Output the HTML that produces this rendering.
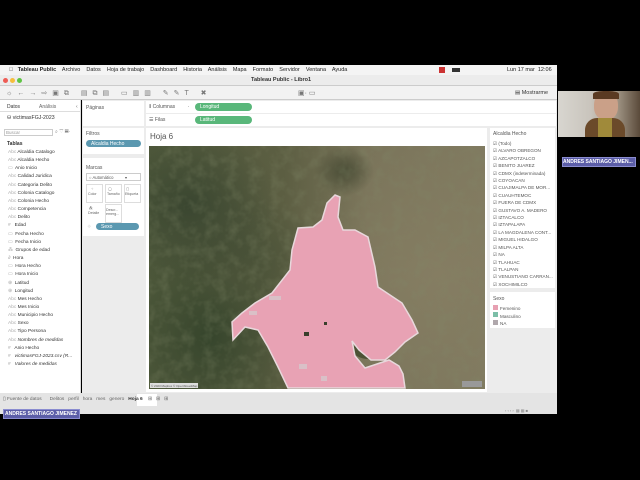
<!DOCTYPE html><html><head><style>
*{margin:0;padding:0;box-sizing:border-box}
body{width:640px;height:480px;background:#000;font-family:"Liberation Sans",sans-serif;position:relative;overflow:hidden;font-size:5px;color:#333}
.a{position:absolute}
.t{position:absolute;white-space:nowrap}
.pill{position:absolute;border-radius:5px;color:#fff;font-size:5px;padding:1px 5px}
</style></head><body>
<!-- menubar -->
<div class="a" style="left:0;top:65px;width:557px;height:10px;background:#f4f4f4"></div>
<div class="t" style="left:9px;top:67px;font-size:5.5px;color:#222">&#63743;&nbsp;&nbsp; <b>Tableau Public</b>&nbsp;&nbsp;&nbsp; Archivo&nbsp;&nbsp;&nbsp; Datos&nbsp;&nbsp;&nbsp; Hoja de trabajo&nbsp;&nbsp;&nbsp; Dashboard&nbsp;&nbsp;&nbsp; Historia&nbsp;&nbsp;&nbsp; Análisis&nbsp;&nbsp;&nbsp; Mapa&nbsp;&nbsp;&nbsp; Formato&nbsp;&nbsp;&nbsp; Servidor&nbsp;&nbsp;&nbsp; Ventana&nbsp;&nbsp;&nbsp; Ayuda</div>
<div class="t" style="left:507px;top:67px;font-size:5.5px;color:#222">Lun 17 mar&nbsp; 12:06</div>
<div class="a" style="left:439px;top:67px;width:6px;height:6px;background:#c33"></div>
<div class="a" style="left:452px;top:68px;width:8px;height:4px;background:#333"></div>
<!-- title bar -->
<div class="a" style="left:0;top:75px;width:557px;height:11px;background:#ececec;border-bottom:1px solid #ccc"></div>
<div class="a" style="left:3px;top:78px;width:5px;height:5px;border-radius:50%;background:#ee5c55"></div>
<div class="a" style="left:10px;top:78px;width:5px;height:5px;border-radius:50%;background:#f5be3c"></div>
<div class="a" style="left:17px;top:78px;width:5px;height:5px;border-radius:50%;background:#5ec443"></div>
<div class="t" style="left:251px;top:77px;font-size:5.5px;font-weight:bold;color:#333">Tableau Public - Libro1</div>
<!-- toolbar -->
<div class="a" style="left:0;top:86px;width:557px;height:14px;background:#f2f2f2;border-bottom:1px solid #ccc"></div>
<div class="t" style="left:6px;top:89px;font-size:7px;color:#777;letter-spacing:5px">☼←→⇨▣⧉ ▤⧉▤ ▭▥▥ ✎✎T ✖</div>
<div class="t" style="left:515px;top:90px;font-size:5.5px;color:#333">▤ Mostrarme</div>
<div class="t" style="left:298px;top:89px;font-size:7px;color:#777">▣· ▭</div>
<!-- left pane -->
<div class="a" style="left:0;top:100px;width:81px;height:293px;background:#fff;border-right:1px solid #ddd"></div>
<div class="t" style="left:7px;top:104px;font-size:5px;color:#333">Datos</div>
<div class="t" style="left:39px;top:104px;font-size:5px;color:#666">Análisis</div>
<div class="t" style="left:76px;top:104px;font-size:5px;color:#666">‹</div>
<div class="a" style="left:0;top:111px;width:81px;height:1px;background:#ddd"></div>
<div class="t" style="left:7px;top:115px;font-size:5.2px;color:#333">⛁ victimasFGJ-2023</div>
<div class="a" style="left:4px;top:129px;width:49px;height:7px;border:1px solid #ccc"></div>
<div class="t" style="left:6px;top:130px;font-size:4.5px;color:#999">Buscar</div>
<div class="t" style="left:55px;top:129px;font-size:5px;color:#888">⌕ ▽ ▤·</div>
<div class="t" style="left:7px;top:141px;font-size:5px;font-weight:bold;color:#333">Tablas</div>
<div class="t" style="left:8px;top:149px;font-size:4.8px;line-height:8.15px;color:#333">
<span style="color:#aaa">Abc</span> Alcaldia Catalogo<br><span style="color:#aaa">Abc</span> Alcaldia Hecho<br><span style="color:#aaa">▭</span>&nbsp; Anio Inicio<br><span style="color:#aaa">Abc</span> Calidad Juridica<br><span style="color:#aaa">Abc</span> Categoria Delito<br><span style="color:#aaa">Abc</span> Colonia Catalogo<br><span style="color:#aaa">Abc</span> Colonia Hecho<br><span style="color:#aaa">Abc</span> Competencia<br><span style="color:#aaa">Abc</span> Delito<br><span style="color:#aaa">#</span>&nbsp;&nbsp; Edad<br><span style="color:#aaa">▭</span>&nbsp; Fecha Hecho<br><span style="color:#aaa">▭</span>&nbsp; Fecha Inicio<br><span style="color:#aaa">⁂</span>&nbsp; Grupos de edad<br><span style="color:#aaa">∂</span>&nbsp; Hora<br><span style="color:#aaa">▭</span>&nbsp; Hora Hecho<br><span style="color:#aaa">▭</span>&nbsp; Hora Inicio<br><span style="color:#aaa">⊕</span>&nbsp; Latitud<br><span style="color:#aaa">⊕</span>&nbsp; Longitud<br><span style="color:#aaa">Abc</span> Mes Hecho<br><span style="color:#aaa">Abc</span> Mes Inicio<br><span style="color:#aaa">Abc</span> Municipio Hecho<br><span style="color:#aaa">Abc</span> Sexo<br><span style="color:#aaa">Abc</span> Tipo Persona<br><span style="color:#aaa">Abc</span> <i>Nombres de medidas</i><br><span style="color:#aaa">#</span>&nbsp;&nbsp; Anio Hecho<br><span style="color:#aaa">#</span>&nbsp;&nbsp; <i>victimasFGJ-2023.csv (R...</i><br><span style="color:#aaa">#</span>&nbsp;&nbsp; <i>Valores de medidas</i></div>
<!-- middle pane -->
<div class="a" style="left:82px;top:100px;width:63px;height:293px;background:#ececec"></div>
<div class="a" style="left:83px;top:101px;width:61px;height:25px;background:#fff"></div>
<div class="t" style="left:86px;top:105px;font-size:5px;color:#555">Páginas</div>
<div class="a" style="left:83px;top:128px;width:61px;height:26px;background:#fff"></div>
<div class="t" style="left:86px;top:131px;font-size:5px;color:#555">Filtros</div>
<div class="pill" style="left:86px;top:140px;width:55px;height:7px;background:#5b98b0">Alcaldia Hecho</div>
<div class="a" style="left:83px;top:158px;width:61px;height:78px;background:#fff"></div>
<div class="t" style="left:86px;top:165px;font-size:5px;color:#555">Marcas</div>
<div class="a" style="left:86px;top:173px;width:55px;height:8px;border:1px solid #ccc"></div>
<div class="t" style="left:89px;top:175px;font-size:4.2px;color:#555">○ Automático&nbsp;&nbsp;&nbsp;&nbsp;&nbsp;&nbsp;&nbsp;&nbsp;&nbsp; ▾</div>
<div class="a" style="left:86px;top:184px;width:17px;height:19px;border:1px solid #ddd"></div>
<div class="a" style="left:105px;top:184px;width:17px;height:19px;border:1px solid #ddd"></div>
<div class="a" style="left:124px;top:184px;width:17px;height:19px;border:1px solid #ddd"></div>
<div class="t" style="left:88px;top:187px;font-size:3.6px;color:#666;line-height:5px;text-align:center">⁘<br>Color</div>
<div class="t" style="left:107px;top:187px;font-size:3.6px;color:#666;line-height:5px">&nbsp;◯<br>Tamaño</div>
<div class="t" style="left:125px;top:187px;font-size:3.6px;color:#666;line-height:5px">&nbsp;▢<br>Etiqueta</div>
<div class="a" style="left:105px;top:204px;width:17px;height:19px;border:1px solid #ddd"></div>
<div class="t" style="left:88px;top:206px;font-size:3.6px;color:#666;line-height:5px">&nbsp;⁂<br>Detalle</div>
<div class="t" style="left:106px;top:208px;font-size:3.6px;color:#666;line-height:4px">Descr...<br>emerg...</div>
<div class="t" style="left:87px;top:224px;font-size:5px;color:#777">⁘</div>
<div class="pill" style="left:96px;top:223px;width:43px;height:7px;background:#5b98b0">Sexo</div>
<!-- shelves -->
<div class="a" style="left:145px;top:100px;width:412px;height:27px;background:#ececec"></div>
<div class="a" style="left:146px;top:101px;width:410px;height:12px;background:#fff"></div>
<div class="a" style="left:146px;top:114px;width:410px;height:12px;background:#fff"></div>
<div class="t" style="left:149px;top:104px;font-size:5px;color:#555">⦀ Columnas&nbsp;&nbsp;&nbsp;&nbsp;&nbsp;&nbsp;&nbsp;&nbsp; ·</div>
<div class="t" style="left:149px;top:117px;font-size:5px;color:#555">☰ Filas</div>
<div class="pill" style="left:195px;top:103px;width:57px;height:8px;background:#59b77a">Longitud</div>
<div class="pill" style="left:195px;top:116px;width:57px;height:8px;background:#59b77a">Latitud</div>
<!-- view -->
<div class="a" style="left:145px;top:127px;width:412px;height:266px;background:#ececec"></div>
<div class="a" style="left:146px;top:128px;width:341px;height:264px;background:#fff"></div>
<div class="t" style="left:150px;top:132px;font-size:8px;color:#555">Hoja 6</div>
<div class="a" style="left:149px;top:146px;width:336px;height:243px;background:
radial-gradient(ellipse 30px 25px at 195px 25px,#4a4d36,transparent),
radial-gradient(ellipse 90px 80px at 40px 60px,#3a4630,transparent),
radial-gradient(ellipse 70px 60px at 100px 110px,#4a5238,transparent),
radial-gradient(ellipse 90px 110px at 60px 190px,#36452c,transparent),
radial-gradient(ellipse 140px 140px at 290px 130px,#857d62,transparent),
linear-gradient(90deg,#505a3c,#5c5e42 40%,#7a745a 65%,#807a60);overflow:hidden">
<svg width="336" height="243" style="position:absolute;left:0;top:0">
<filter id="n"><feTurbulence type="fractalNoise" baseFrequency="0.09" numOctaves="3" seed="4"/><feColorMatrix type="matrix" values="0 0 0 0 0.22  0 0 0 0 0.25  0 0 0 0 0.14  0 0 0 1.2 -0.5"/></filter>
<rect width="336" height="243" filter="url(#n)" opacity="0.55"/>
<ellipse cx="220" cy="204" rx="16" ry="9" fill="#4c5235"/>
<path d="M186 49 L191 51 L189 71 L194 84 L206 84 L219 91 L226 121 L229 141 L253 157 L263 174 L269 187 L256 196 L246 206 L236 214 L222 214 L210 204 L203 195 L206 210 L216 222 L240 214 L250 220 L254 228 L256 242 L139 242 L129 221 L119 201 L109 184 L96 181 L84 194 L83 176 L93 167 L106 157 L123 147 L141 124 L143 104 L149 82 L164 81 L173 74 L178 57 Z" fill="#e8a2b4" stroke="#e8d8dc" stroke-width="1.5"/>
<g fill="#d6c8cc" opacity="0.8"><rect x="120" y="150" width="12" height="4"/><rect x="100" y="165" width="8" height="4"/><rect x="150" y="218" width="8" height="5"/><rect x="172" y="230" width="6" height="5"/></g>
<g fill="#3a3f2c"><rect x="155" y="186" width="5" height="4"/><rect x="175" y="176" width="3" height="3"/></g>
<rect x="1" y="237" width="48" height="5" fill="#ddd"/>
<rect x="313" y="235" width="20" height="6" fill="#999"/>
</svg>
<div class="t" style="left:2px;top:238px;font-size:3px;color:#555">© 2023 Mapbox © OpenStreetMap</div>
</div>
<!-- legends -->
<div class="a" style="left:490px;top:128px;width:65px;height:160px;background:#fff"></div>
<div class="t" style="left:493px;top:131px;font-size:5px;color:#555">Alcaldia Hecho</div>
<div class="t" style="left:493px;top:140px;font-size:4.6px;line-height:7.4px;color:#555">☑ (Todo)<br>☑ ALVARO OBREGON<br>☑ AZCAPOTZALCO<br>☑ BENITO JUAREZ<br>☑ CDMX (indeterminada)<br>☑ COYOACAN<br>☑ CUAJIMALPA DE MOR...<br>☑ CUAUHTEMOC<br>☑ FUERA DE CDMX<br>☑ GUSTAVO A. MADERO<br>☑ IZTACALCO<br>☑ IZTAPALAPA<br>☑ LA MAGDALENA CONT...<br>☑ MIGUEL HIDALGO<br>☑ MILPA ALTA<br>☑ NA<br>☑ TLAHUAC<br>☑ TLALPAN<br>☑ VENUSTIANO CARRAN...<br>☑ XOCHIMILCO</div>
<div class="a" style="left:490px;top:292px;width:65px;height:36px;background:#fff"></div>
<div class="t" style="left:493px;top:296px;font-size:5px;color:#555">Sexo</div>
<div class="a" style="left:493px;top:305px;width:5px;height:5px;background:#e7a0b2"></div>
<div class="a" style="left:493px;top:312px;width:5px;height:5px;background:#7cbfa8"></div>
<div class="a" style="left:493px;top:320px;width:5px;height:5px;background:#b0a8ac"></div>
<div class="t" style="left:500px;top:305px;font-size:4.6px;line-height:7.7px;color:#555">Femenino<br>Masculino<br>NA</div>
<!-- tabs -->
<div class="a" style="left:0;top:393px;width:557px;height:21px;background:#e4e4e4"></div>
<div class="a" style="left:137px;top:394px;width:20px;height:12px;background:#fff"></div>
<div class="t" style="left:3px;top:397px;font-size:4.8px;color:#666">▯ Fuente de datos&nbsp;&nbsp;&nbsp;&nbsp;&nbsp; Delitos&nbsp;&nbsp; perfil&nbsp;&nbsp; hora&nbsp;&nbsp; mes&nbsp;&nbsp; genero&nbsp;&nbsp; <b style="color:#333">Hoja 6</b>&nbsp;&nbsp;&nbsp; ⊞&nbsp;&nbsp; ⊞&nbsp;&nbsp; ⊞</div>
<div class="t" style="left:505px;top:408px;font-size:4px;color:#888">‹ ‹ › ›&nbsp; ▦ ▦ ■</div>
<!-- webcam -->
<div class="a" style="left:558px;top:91px;width:82px;height:46px;background:linear-gradient(90deg,#d8d6d0,#c9c4bc 40%,#a59a8a 70%,#5a4a3a)"></div>
<div class="a" style="left:594px;top:92px;width:24px;height:28px;border-radius:45%;background:#caa088"></div>
<div class="a" style="left:593px;top:91px;width:26px;height:8px;border-radius:40% 40% 0 0;background:#5a3a22"></div>
<div class="a" style="left:585px;top:118px;width:40px;height:19px;border-radius:12px 12px 0 0;background:#6b4a2a"></div>
<div class="a" style="left:598px;top:118px;width:14px;height:19px;background:#a08a3a"></div>
<div class="a" style="left:562px;top:157px;width:74px;height:10px;background:#5c5ea8;border:1px solid #8a8cd0"></div>
<div class="t" style="left:563px;top:159px;font-size:5px;font-weight:bold;color:#fff">ANDRES SANTIAGO JIMEN...</div>
<div class="a" style="left:3px;top:409px;width:77px;height:10px;background:#5c5ea8;border:1px solid #8a8cd0"></div>
<div class="t" style="left:5px;top:411px;font-size:5px;font-weight:bold;color:#fff">ANDRES SANTIAGO JIMENEZ</div>
</body></html>
